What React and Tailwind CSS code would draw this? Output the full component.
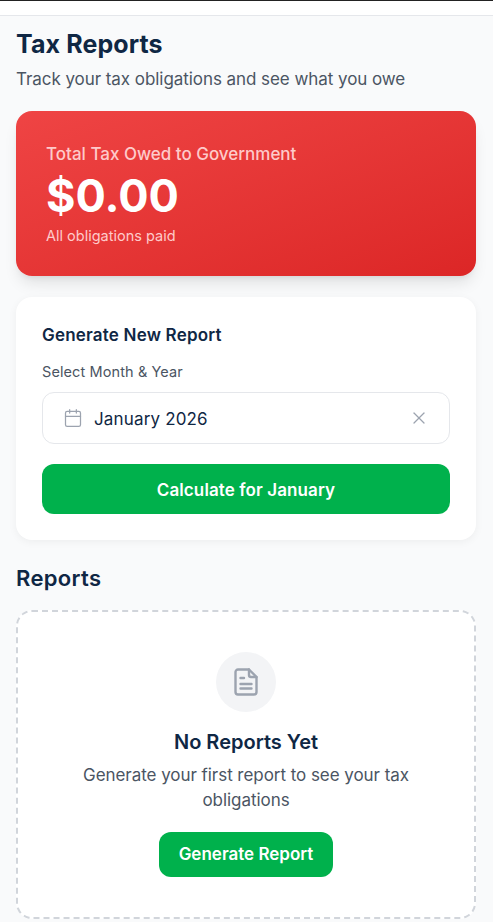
import { Calendar, X } from "lucide-react";

function DocIcon() {
  return (
    <svg width="30" height="30" viewBox="0 0 30 30" fill="none" stroke="#9ca3af" strokeWidth="2.4" strokeLinecap="round" strokeLinejoin="round">
      <path d="M18 2.500H7a2.500 2.500 0 0 0-2.500 2.500v20A2.500 2.500 0 0 0 7 27.500h16a2.500 2.500 0 0 0 2.500-2.500V10z" />
      <path d="M18 2.500V8a2 2 0 0 0 2 2h5.500" />
      <path d="M9.500 11h3.500M9.500 17h11M9.500 21.500h11" />
    </svg>
  );
}

export default function App() {
  return (
    <div className="min-h-[922px] bg-[#f9fafb] font-['Inter',sans-serif]">
      {/* Top bar */}
      <div className="h-[16px] bg-white border-t border-t-[#222222] border-b border-b-[#e5e7eb]" />

      <div className="pl-4 pr-[17px] pt-[11px]">
        <h1 className="text-[25px] leading-[34px] font-bold tracking-[0.1px] text-[#0f2744]">Tax Reports</h1>
        <p className="mt-[6px] text-[17px] leading-[24px] tracking-[-0.06px] text-[#4b5563]">
          Track your tax obligations and see what you owe
        </p>

        {/* Total card */}
        <div className="mt-[20px] h-[165px] rounded-2xl bg-gradient-to-br from-[#ef4444] to-[#dc2626] px-[30px] pt-[31px] shadow-lg">
          <p className="text-[17px] leading-[24px] font-medium text-[#fecaca]">Total Tax Owed to Government</p>
          <p className="text-[45px] leading-[48px] font-bold text-white mt-[6px]">$0.00</p>
          <p className="mt-[6px] text-[14.500px] leading-[20px] text-[#fecaca]">All obligations paid</p>
        </div>

        {/* Generate form */}
        <div className="mt-[21px] rounded-2xl bg-white px-[26px] pt-[26px] pb-[26px] shadow-[0_2px_8px_rgba(0,0,0,0.05)]">
          <h2 className="text-[17px] leading-[24px] font-semibold tracking-[0.2px] text-[#0f2744]">Generate New Report</h2>
          <p className="mt-[15px] text-[14.500px] leading-[20px] tracking-[0.1px] text-[#4b5563]">Select Month &amp; Year</p>
          <div className="mt-[10px] flex h-[52px] items-center rounded-xl border border-[#e5e7eb] bg-white pl-[20px] pr-[20px]">
            <Calendar size={20} strokeWidth={1.5} className="text-[#9ca3af]" />
            <span className="ml-[11px] pt-[4px] text-[17px] tracking-[0.16px] text-[#0f2744]">January 2026</span>
            <X size={20} strokeWidth={1.5} className="ml-auto text-[#9ca3af]" />
          </div>
          <button className="mt-[20px] h-[50px] w-full rounded-xl bg-[#00b14c] pt-[3px] text-[17px] font-semibold tracking-[0.1px] text-white">
            Calculate for January
          </button>
        </div>

        <h2 className="mt-[23px] text-[22px] leading-[30px] font-semibold tracking-[0.35px] text-[#0f2744]">Reports</h2>

        {/* Empty state */}
        <div className="mt-[17px] flex h-[309px] flex-col items-center rounded-2xl border-2 border-dashed border-[#d1d5db] bg-white px-[32px] pt-[40px]">
          <div className="flex h-[60px] w-[60px] items-center justify-center rounded-full bg-[#f3f4f6]">
            <DocIcon />
          </div>
          <h3 className="mt-[16px] text-[20px] leading-[28px] font-semibold text-[#0f2744]">No Reports Yet</h3>
          <p className="mt-[7px] text-center text-[17px] leading-[25px] tracking-[-0.05px] text-[#4b5563]">
            Generate your first report to see your tax obligations
          </p>
          <button className="mt-[19px] h-[45px] rounded-xl bg-[#00b14c] w-[174px] text-[17px] font-semibold text-white">
            Generate Report
          </button>
        </div>
      </div>
    </div>
  );
}
